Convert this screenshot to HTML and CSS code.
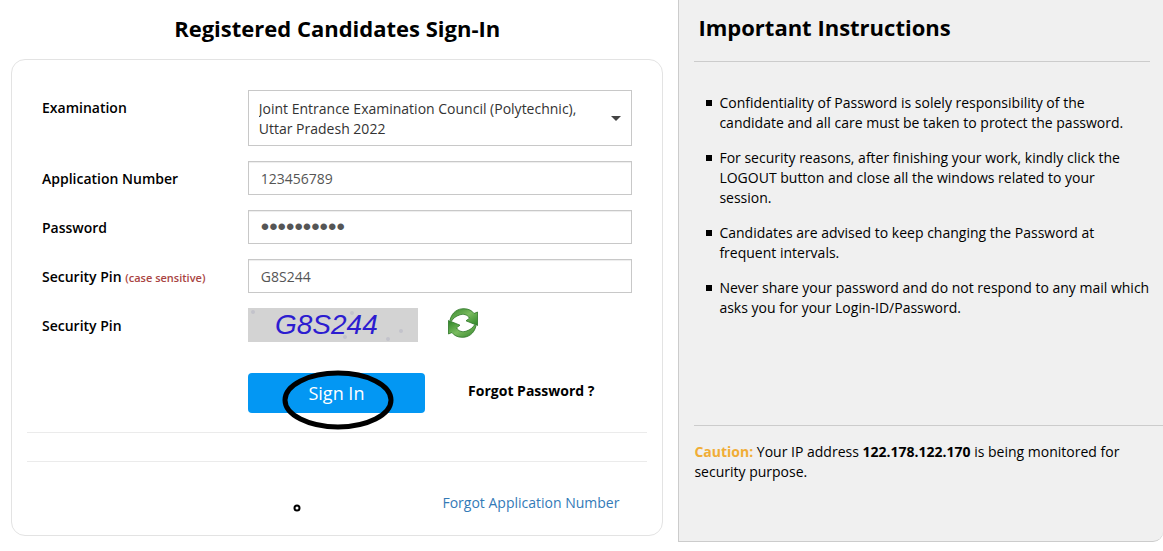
FILE: index.html
```html
<!DOCTYPE html>
<html lang="en">
<head>
<meta charset="utf-8">
<meta name="viewport" content="width=device-width, initial-scale=1">
<title>Registered Candidates Sign-In</title>
<link rel="stylesheet" href="styles.css">
</head>
<body>
<div class="page">
  <main class="signin">
    <h1 class="title signin-title">Registered Candidates Sign-In</h1>
    <form class="card">
      <div class="row">
        <label class="label" for="exam">Examination</label>
        <div class="field">
          <div class="select-wrap">
            <select class="select" id="exam">
              <option>Joint Entrance Examination Council (Polytechnic), Uttar Pradesh 2022</option>
            </select>
          </div>
        </div>
      </div>
      <div class="row">
        <label class="label" for="appno">Application Number</label>
        <div class="field"><input class="input" id="appno" type="text" value="123456789"></div>
      </div>
      <div class="row">
        <label class="label" for="password">Password</label>
        <div class="field"><input class="input password" id="password" type="password" value="abcdefghij"></div>
      </div>
      <div class="row">
        <label class="label" for="pin">Security Pin <small class="hint">(case sensitive)</small></label>
        <div class="field"><input class="input" id="pin" type="text" value="G8S244"></div>
      </div>
      <div class="row">
        <span class="label">Security Pin</span>
        <div class="field captcha-field">
          <svg class="captcha" width="170" height="34" viewBox="0 0 170 34" role="img" aria-label="Security pin image">
            <rect width="170" height="34" fill="#d3d3d3"/>
            <g fill="#c3c3cb">
              <circle cx="5" cy="4" r="2"/><circle cx="104" cy="5" r="2"/><circle cx="153" cy="23" r="2"/>
              <circle cx="97" cy="29" r="2"/><circle cx="140" cy="31" r="2"/>
            </g>
            <text class="captcha-text" x="27" y="26">G8S244</text>
          </svg>
          <button class="refresh" type="button" aria-label="Refresh security pin">
            <svg width="30" height="30" viewBox="0 0 30 30" aria-hidden="true">
              <defs>
                <linearGradient id="leaf" x1="0" y1="0" x2="1" y2="1">
                  <stop offset="0" stop-color="#35852c"/><stop offset=".5" stop-color="#79bb5e"/><stop offset="1" stop-color="#2c8426"/>
                </linearGradient>
              </defs>
              <g fill="url(#leaf)" stroke="#2c7526" stroke-width=".8" stroke-linejoin="round">
                <path d="M2 12C4 4 10 .5 16 .7C20.500 .8 24 2.500 26 5.500L29.500 4V17.500L18 12.800L21.500 10.200C19.500 6.500 15 5.500 11.500 7C8 8 5 10.500 3.500 13Z"/>
                <path d="M2 12C4 4 10 .5 16 .7C20.500 .8 24 2.500 26 5.500L29.500 4V17.500L18 12.800L21.500 10.200C19.500 6.500 15 5.500 11.500 7C8 8 5 10.500 3.500 13Z" transform="rotate(180 15 15)"/>
              </g>
            </svg>
          </button>
        </div>
      </div>
      <div class="row actions">
        <div class="field action-grid">
          <div class="submit-wrap">
            <button class="submit" type="submit">Sign In</button>
            <svg class="ring" width="112" height="62" viewBox="0 0 112 62" aria-hidden="true">
              <ellipse cx="56" cy="31" rx="53" ry="27" fill="none" stroke="#000" stroke-width="5"/>
            </svg>
          </div>
          <a class="forgot-password" href="#">Forgot Password ?</a>
        </div>
      </div>
      <hr class="rule">
      <hr class="rule second">
      <div class="card-foot">
        <svg class="dot" width="8" height="8" viewBox="0 0 8 8" aria-hidden="true">
          <circle cx="4" cy="4" r="2.500" fill="#fff" stroke="#000" stroke-width="2"/>
        </svg>
        <a class="forgot-app" href="#">Forgot Application Number</a>
      </div>
    </form>
  </main>
  <aside class="info">
    <h2 class="title info-title">Important Instructions</h2>
    <ul class="tips">
      <li class="tip">Confidentiality of Password is solely responsibility of the candidate and all care must be taken to protect the password.</li>
      <li class="tip">For security reasons, after finishing your work, kindly click the LOGOUT button and close all the windows related to your session.</li>
      <li class="tip">Candidates are advised to keep changing the Password at frequent intervals.</li>
      <li class="tip">Never share your password and do not respond to any mail which asks you for your Login-ID/Password.</li>
    </ul>
    <p class="caution"><strong class="caution-word">Caution:</strong> Your IP address <strong>122.178.122.170</strong> is being monitored for security purpose.</p>
  </aside>
</div>
</body>
</html>
```
FILE: styles.css
```css
* { box-sizing: border-box; }

body {
  margin: 0;
  background: #fff;
  color: #000;
  font: 14px/20px "Open Sans", "Noto Sans", sans-serif;
}

.page {
  display: grid;
  grid-template-columns: 7fr 5fr;
  align-items: stretch;
}

.title {
  margin: 0;
  font-size: 22px;
  line-height: 30px;
  font-weight: 700;
}

/* Sign-in column */
.signin { padding: 13px 15px 6px 11px; }
.signin-title { text-align: center; }

.card {
  margin: 16px 0 0;
  padding: 30px 15px 22px;
  border: 1px solid #e3e3e3;
  border-radius: 14px;
}

.row {
  display: grid;
  grid-template-columns: minmax(0, 1fr) minmax(0, 2fr);
  margin-bottom: 15px;
}

.label {
  padding: 8px 0 0 15px;
  font-weight: 600;
}

.hint {
  color: #a94442;
  font-size: 11px;
}

.field { padding: 0 15px 0 14px; }

.select-wrap { position: relative; }

.select-wrap::after {
  content: "";
  position: absolute;
  top: 26px;
  right: 11px;
  border: 5px solid transparent;
  border-top-color: #444;
  border-bottom: 0;
  pointer-events: none;
}

.select,
.input {
  display: block;
  width: 100%;
  border: 1px solid #c8c8c8;
  border-radius: 0;
  background: #fff;
  font: inherit;
}

.select {
  appearance: none;
  height: 56px;
  padding: 8px 40px 6px 10px;
  color: #333;
  white-space: normal;
}

.input {
  height: 34px;
  padding: 6px 12px;
  color: #555;
  box-shadow: inset 0 1px 1px rgba(0, 0, 0, .075);
}

.password {
  font-family: "Liberation Sans", sans-serif;
  font-size: 24px;
}

.captcha-field {
  display: flex;
  align-items: flex-start;
  gap: 30px;
}

.captcha { display: block; }

.captcha-text {
  fill: #2c1cd0;
  font: italic 28px "Liberation Sans", sans-serif;
}

.refresh {
  padding: 0;
  border: 0;
  background: none;
}

.refresh svg { display: block; }

.actions { margin: 31px 0 0; }

.action-grid {
  grid-column: 2;
  display: grid;
  grid-template-columns: 1fr 1fr;
  gap: 30px;
}

.submit-wrap { position: relative; }

.submit {
  display: block;
  width: 100%;
  height: 40px;
  padding: 0 0 1px;
  border: 0;
  border-radius: 4px;
  background: #0397f3;
  color: #fff;
  font: 18px/24px "Open Sans", "Noto Sans", sans-serif;
}

/* Hand-drawn ring around the submit button */
.ring {
  position: absolute;
  top: -4px;
  left: 34px;
  pointer-events: none;
}

.forgot-password {
  padding: 8px 0 0 13px;
  color: #000;
  font-weight: 700;
  text-decoration: none;
  white-space: nowrap;
}

.rule {
  height: 1px;
  margin: 19px 0 0;
  border: 0;
  background: #ebebeb;
}

.second { margin-top: 28px; }

.card-foot {
  position: relative;
  padding: 31px 28px 0;
  text-align: right;
}

.dot {
  position: absolute;
  top: 42px;
  left: 266px;
}

.forgot-app {
  color: #337ab7;
  text-decoration: none;
}

/* Instructions column */
.info {
  padding: 12px 0 59px 15px;
  border: 1px solid #ccc;
  border-width: 0 0 1px 1px;
  border-radius: 0 0 10px 0;
  background: #f0f0f0;
}

.info-title {
  margin-right: 13px;
  padding: 0 4px 19px;
  border-bottom: 1px solid #ccc;
}

.tips {
  margin: 31px 13px 107px 0;
  padding: 0;
  list-style: none;
}

.tip {
  position: relative;
  margin-bottom: 15px;
  padding-left: 25px;
}

.tip:last-child { margin-bottom: 0; }

.tip::before {
  content: "";
  position: absolute;
  top: 7px;
  left: 12px;
  width: 6px;
  height: 6px;
  background: #000;
}

.caution {
  margin: 0;
  padding: 16px 13px 0 0;
  border-top: 1px solid #ccc;
}

.caution-word { color: #f0ad36; }
```
